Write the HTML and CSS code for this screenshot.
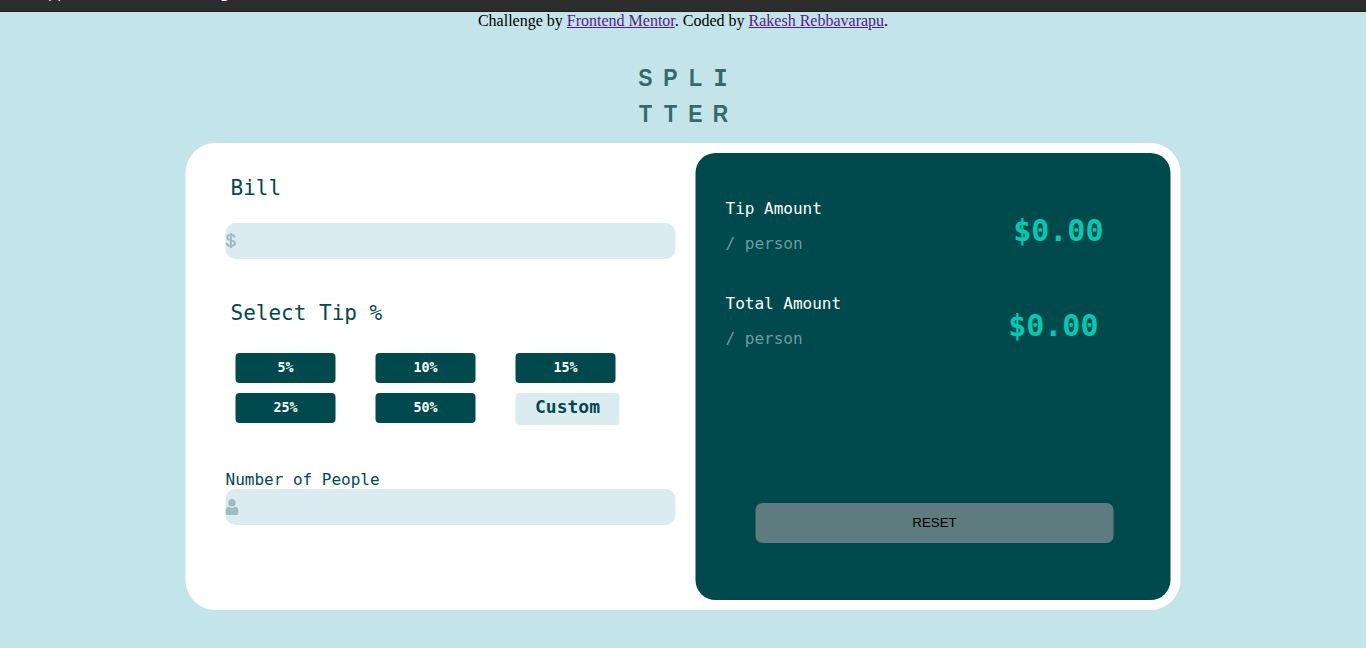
FILE: index.html
```html
<!DOCTYPE html>
<html lang="en">
<head>
<meta charset="utf-8">
<title>Splitter</title>
<link rel="stylesheet" href="styles.css">
</head>
<body>
<div class="topbar" aria-hidden="true"><span class="topbar-a">pp</span><span class="topbar-b">g</span></div>
<p class="attribution">Challenge by <a href="#">Frontend Mentor</a>. Coded by <a href="#">Rakesh Rebbavarapu</a>.</p>
<h1 class="logo">
  <span>S</span><span>P</span><span>L</span><span class="slab">I</span>
  <span>T</span><span>T</span><span>E</span><span>R</span>
</h1>
<main class="card">
  <section class="form">
    <h2 class="label">Bill</h2>
    <div class="field">
      <svg class="dollar" width="11" height="17" viewBox="0 0 11 17"><path d="M9.2 5.5C9 3.8 7.6 3 5.3 3 3.1 3 1.7 3.9 1.7 5.4c0 1.8 1.6 2.3 3.7 2.8 2.3.5 4.1 1 4.1 3 0 1.7-1.6 2.7-4.1 2.7-2.6 0-4.2-1.1-4.3-3M5.4 1v15" fill="none" stroke="#9ebbbd" stroke-width="1.9"/></svg>
    </div>
    <h2 class="label label-tip">Select Tip %</h2>
    <div class="tips">
      <button class="tip">5%</button>
      <button class="tip">10%</button>
      <button class="tip">15%</button>
      <button class="tip">25%</button>
      <button class="tip">50%</button>
      <div class="custom">Custom</div>
    </div>
    <div class="people-label">Number of People</div>
    <div class="field">
      <svg class="person" width="13" height="16" viewBox="0 0 13 16"><path d="M9.573 7.729c.641.257 1.17.43 1.588.52.592.125 1.04.515 1.346 1.167.222.476.376 1.118.463 1.926.053.492.053 1.24 0 2.242-.032.607-.156 1.12-.373 1.54-.304.585-.72.876-1.246.876H1.6c-.575 0-1.002-.3-1.28-.9C.107 14.642 0 14.026 0 13.25c0-1.28.08-2.238.24-2.874.268-1.064.696-1.742 1.285-2.034.345-.171.961-.375 1.848-.613C4.32 8.493 5.364 8.875 6.5 8.875c1.137 0 2.161-.382 3.073-1.146Z" fill="#9ebbbd"/><ellipse cx="6.4" cy="3.8" rx="3.7" ry="3.8" fill="#9ebbbd"/></svg>
    </div>
  </section>
  <section class="result">
    <div class="row">
      <div class="caption"><p>Tip Amount</p><p class="muted">/ person</p></div>
      <div class="amount">$0.00</div>
    </div>
    <div class="row row-total">
      <div class="caption"><p>Total Amount</p><p class="muted">/ person</p></div>
      <div class="amount">$0.00</div>
    </div>
    <button class="reset">RESET</button>
  </section>
</main>
</body>
</html>
```
FILE: styles.css
```css
* { box-sizing: border-box; }
body {
  margin: 0;
  height: 648px;
  overflow: hidden;
  background: #c3e4e8;
  font-family: "DejaVu Sans Mono", monospace;
}
h1, h2, p { margin: 0; font-weight: 400; }
button { border: 0; padding: 0; }
svg { display: block; }

.topbar {
  display: flex;
  height: 12px;
  padding-left: 48px;
  overflow: hidden;
  background: #2d2d2d;
  border-bottom: 1px solid #1e1e1e;
  color: #fff;
  font: 15px/15px "Noto Sans", sans-serif;
}
.topbar-a { width: 172px; margin-top: -16px; }
.topbar-b { margin-top: -16px; }

.attribution {
  height: 18px;
  line-height: 18px;
  text-align: center;
  color: #000;
  font-family: "Liberation Serif", serif;
  font-size: 16px;
}
.attribution a { color: #551a8b; }

.logo {
  display: grid;
  grid-template-columns: repeat(4, 24.9px);
  grid-auto-rows: 36px;
  justify-content: center;
  margin-top: 30px;
  line-height: 36px;
  font-family: "Liberation Sans", sans-serif;
  font-size: 24.5px;
  font-weight: 700;
  color: #36696a;
  text-align: center;
}
.logo span { transform: scaleX(0.87); }
.logo .slab {
  font-family: "DejaVu Sans Mono", monospace;
  font-size: 23px;
  transform: scaleX(1.05);
}

.card {
  display: flex;
  width: 995px;
  height: 467px;
  margin: 11px 0 0 186px;
  padding: 10px;
  background: #fff;
  border-radius: 30px;
  transform: translateX(-0.5px);
}
.form { width: 500px; padding: 20px 20px 0 30px; }
.label {
  height: 30px;
  padding-left: 5px;
  line-height: 30px;
  font-size: 21px;
  color: #00494d;
}
.form .field {
  display: flex;
  align-items: center;
  height: 36px;
  background: #dbecf0;
  border-radius: 10px;
}
.dollar { margin-bottom: 2px; }
.label + .field { margin-top: 20px; }
.label-tip { margin-top: 39px; }
.tips {
  display: grid;
  grid-template-columns: repeat(3, 104px);
  grid-template-rows: 30px 32px;
  gap: 10px 36px;
  margin: 25px 0 0 10px;
}
.tip {
  width: 100px;
  height: 30px;
  padding-bottom: 2px;
  border-radius: 4px;
  background: #00494d;
  color: #fff;
  font: bold 13.333px "DejaVu Sans Mono", monospace;
}
.custom {
  height: 32px;
  line-height: 27px;
  text-align: center;
  border-radius: 4px;
  background: #dbecf0;
  color: #00494d;
  font-size: 18px;
  font-weight: 700;
}
.people-label {
  height: 19px;
  margin-top: 45px;
  line-height: 19px;
  font-size: 16px;
  color: #00494d;
}

.result {
  width: 475px;
  height: 447px;
  padding: 46px 57px 0 30px;
  background: #00494d;
  border-radius: 20px;
}
.row {
  display: flex;
  justify-content: space-between;
  height: 95px;
  padding-right: 10px;
}
.row-total { padding-right: 15px; }
.caption { color: #fff; font-size: 16px; line-height: 19px; }
.caption .muted { margin-top: 16px; color: #6f9a9c; }
.amount {
  margin-top: 14px;
  color: #00cbb2;
  font-size: 30px;
  font-weight: 700;
  line-height: 35px;
}
.reset {
  display: block;
  width: 358px;
  height: 40px;
  margin: 114px 0 0 30px;
  padding-bottom: 2px;
  border-radius: 7px;
  background: #5e7c7f;
  color: #000;
  font: 13.333px "Liberation Sans", sans-serif;
}
```
